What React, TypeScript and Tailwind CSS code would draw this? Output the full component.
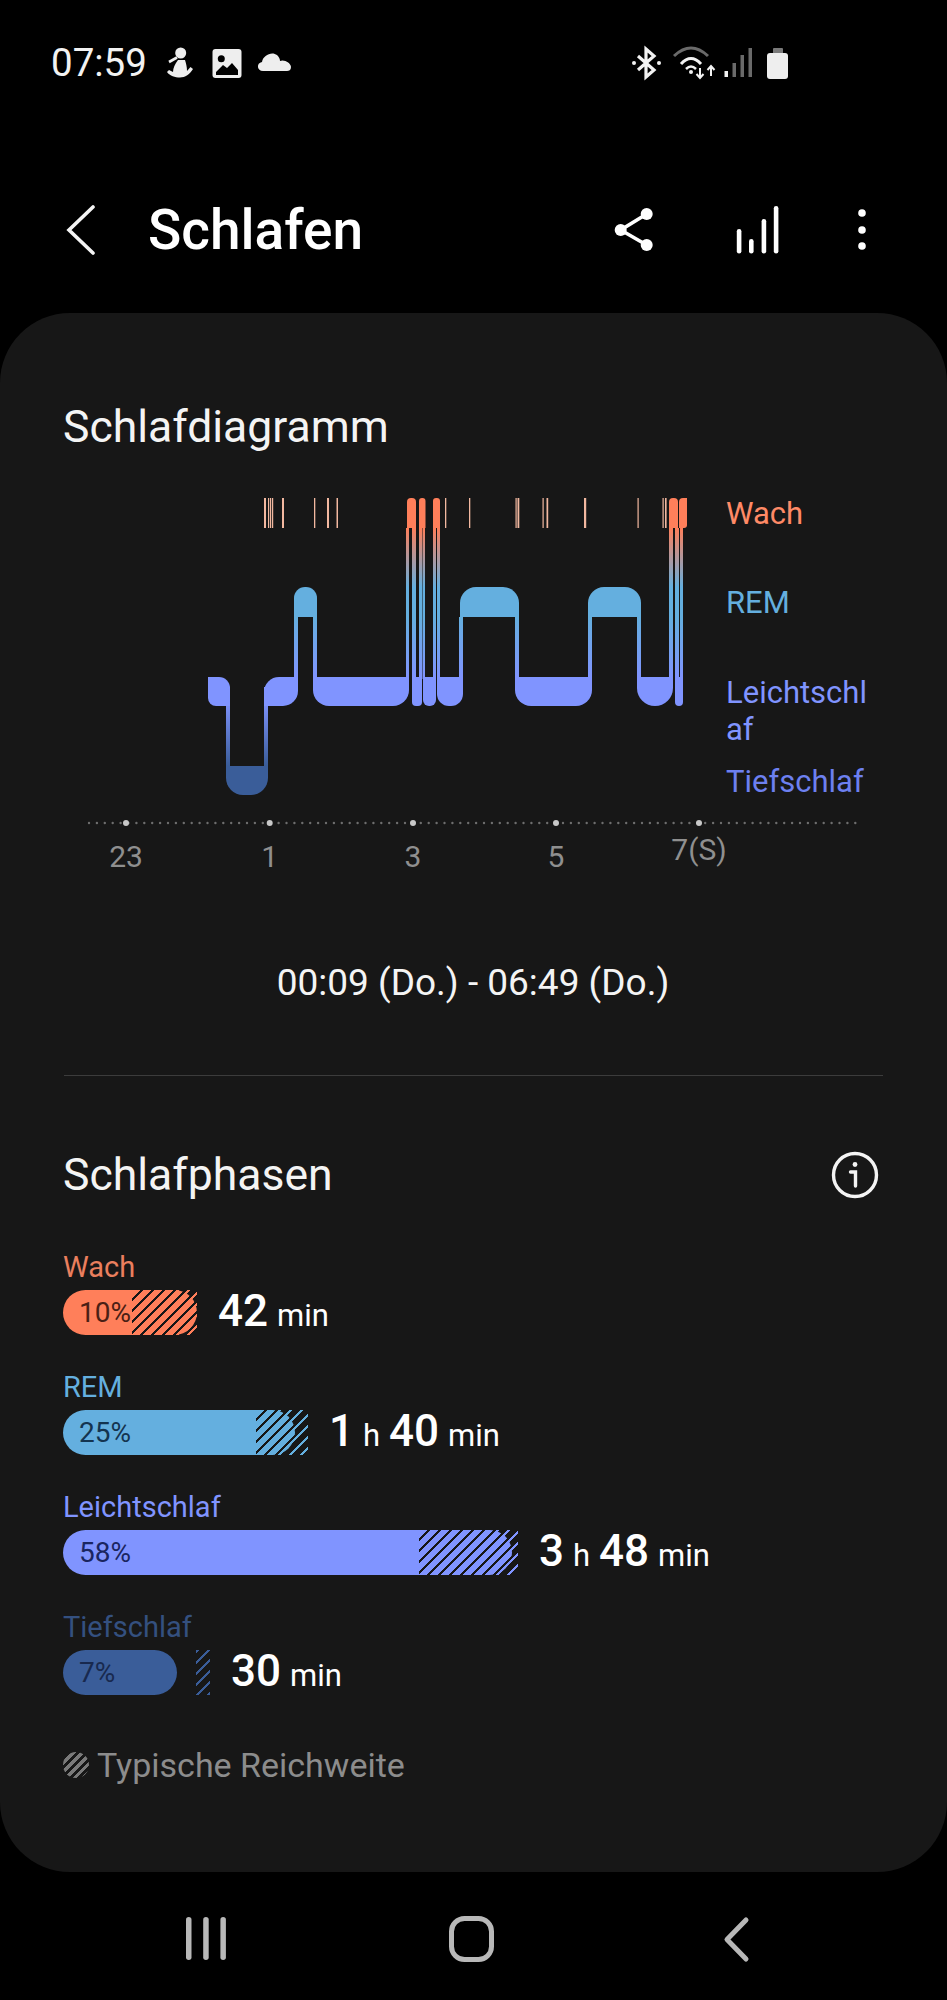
import React from 'react';

// corner radii go top-left, top-right, bottom-right, bottom-left
const block = (x1: number, y1: number, x2: number, y2: number, tl = 0, tr = 0, br = 0, bl = 0) =>
  `M${x1 + tl} ${y1}H${x2 - tr}A${tr} ${tr} 0 0 1 ${x2} ${y1 + tr}V${y2 - br}A${br} ${br} 0 0 1 ${x2 - br} ${y2}H${x1 + bl}A${bl} ${bl} 0 0 1 ${x1} ${y2 - bl}V${y1 + tl}A${tl} ${tl} 0 0 1 ${x1 + tl} ${y1}Z`;

const ORANGE = '#ff7f5a';
const BLUE = '#64afdf';
const PERI = '#8094ff';
const DEEP = '#3a5d99';

const WAKE_TOP = 498;
const WAKE_BOTTOM = 528;
const REM_TOP = 587;
const REM_BOTTOM = 617;
const LIGHT_TOP = 677;
const LIGHT_BOTTOM = 706;
const DEEP_TOP = 766;
const DEEP_BOTTOM = 795;

// [x, width] of the hairline wake marks
const wakeTicks = [
  [264, 2], [268, 1.2], [270, 1.2], [272, 1.2], [282, 2], [314, 1.3], [327, 2], [336.5, 1.5],
  [445, 1.3], [469, 1.3], [515.5, 1.2], [517.5, 1.8], [542.5, 1.2], [546.5, 1.7], [584, 2.2],
  [637.5, 1.2], [662.5, 1.2], [665, 1.6],
];

// [x1, x2, y1, y2] wake/rem to light connectors
const upperLinks = [
  [406, 409, WAKE_BOTTOM, LIGHT_TOP + 2],
  [412, 416, WAKE_BOTTOM, LIGHT_TOP + 2],
  [419, 422, WAKE_BOTTOM, LIGHT_TOP + 2],
  [422.5, 425, WAKE_BOTTOM, LIGHT_TOP + 2],
  [433, 436, WAKE_BOTTOM, LIGHT_TOP + 2],
  [437, 440, WAKE_BOTTOM, LIGHT_TOP + 2],
  [294, 298, REM_BOTTOM, LIGHT_TOP + 2],
  [313, 317, REM_BOTTOM, LIGHT_TOP + 2],
  [459, 463, REM_BOTTOM, LIGHT_TOP + 2],
  [515, 519, REM_BOTTOM, LIGHT_TOP + 2],
  [588, 592, REM_BOTTOM, LIGHT_TOP + 2],
  [637, 641, REM_BOTTOM, LIGHT_TOP + 2],
  [669, 673, WAKE_BOTTOM, LIGHT_TOP + 2],
  [675, 679, WAKE_BOTTOM, LIGHT_TOP + 2],
  [680, 683, WAKE_BOTTOM, LIGHT_TOP + 2],
];

function SleepChart() {
  return (
    <svg width="633" height="320" viewBox="87 490 633 320" className="shrink-0">
      <defs>
        <linearGradient id="upper" gradientUnits="userSpaceOnUse" x1="0" y1={WAKE_BOTTOM} x2="0" y2={LIGHT_TOP}>
          <stop offset="0" stopColor={ORANGE} />
          <stop offset="0.4" stopColor={BLUE} />
          <stop offset="0.6" stopColor={BLUE} />
          <stop offset="1" stopColor={PERI} />
        </linearGradient>
        <linearGradient id="lower" gradientUnits="userSpaceOnUse" x1="0" y1={LIGHT_BOTTOM - 6} x2="0" y2={DEEP_TOP}>
          <stop offset="0" stopColor={PERI} />
          <stop offset="1" stopColor={DEEP} />
        </linearGradient>
      </defs>

      {wakeTicks.map(([x, w]) => (
        <rect key={x} x={x} y={WAKE_TOP} width={w} height={WAKE_BOTTOM - WAKE_TOP} fill="#f2b8a0" />
      ))}

      {upperLinks.map(([x1, x2, y1, y2]) => (
        <rect key={x1} x={x1} y={y1} width={x2 - x1} height={y2 - y1} fill="url(#upper)" />
      ))}
      <rect x="226" y={LIGHT_TOP + 10} width="4" height={DEEP_TOP - LIGHT_TOP - 8} fill="url(#lower)" />
      <rect x="264" y={LIGHT_TOP + 10} width="4" height={DEEP_TOP - LIGHT_TOP - 8} fill="url(#lower)" />

      {/* wake */}
      <path d={block(407, WAKE_TOP, 416, WAKE_BOTTOM, 4, 4)} fill={ORANGE} />
      <path d={block(419, WAKE_TOP, 425.5, WAKE_BOTTOM, 3, 3)} fill={ORANGE} />
      <path d={block(433, WAKE_TOP, 440, WAKE_BOTTOM, 3, 3)} fill={ORANGE} />
      <path d={block(669, WAKE_TOP, 678, WAKE_BOTTOM, 4, 4)} fill={ORANGE} />
      <path d={block(679, WAKE_TOP, 687, WAKE_BOTTOM, 4, 0, 3, 0)} fill={ORANGE} />

      {/* rem */}
      <path d={block(294, REM_TOP, 317, REM_BOTTOM, 11, 11)} fill={BLUE} />
      <rect x="406" y={REM_TOP} width="2.5" height={REM_BOTTOM - REM_TOP} fill={BLUE} />
      <path d={block(460, REM_TOP, 519, REM_BOTTOM, 16, 16)} fill={BLUE} />
      <path d={block(588, REM_TOP, 641, REM_BOTTOM, 16, 16)} fill={BLUE} />

      {/* light */}
      <path d={block(208, LIGHT_TOP, 230, LIGHT_BOTTOM, 0, 11, 0, 8)} fill={PERI} />
      <path d={block(264, LIGHT_TOP, 298, LIGHT_BOTTOM, 15, 0, 15, 0)} fill={PERI} />
      <path d={block(313, LIGHT_TOP, 409, LIGHT_BOTTOM, 0, 0, 16, 16)} fill={PERI} />
      <path d={block(412, LIGHT_TOP, 422, LIGHT_BOTTOM, 0, 0, 4, 4)} fill={PERI} />
      <path d={block(423, LIGHT_TOP, 436, LIGHT_BOTTOM, 0, 0, 6, 6)} fill={PERI} />
      <path d={block(437, LIGHT_TOP, 463, LIGHT_BOTTOM, 0, 0, 12, 12)} fill={PERI} />
      <path d={block(515, LIGHT_TOP, 592, LIGHT_BOTTOM, 0, 0, 16, 16)} fill={PERI} />
      <path d={block(637, LIGHT_TOP, 673, LIGHT_BOTTOM, 0, 0, 18, 18)} fill={PERI} />
      <path d={block(675, LIGHT_TOP, 683, LIGHT_BOTTOM, 0, 0, 4, 4)} fill={PERI} />

      {/* deep */}
      <path d={block(226, DEEP_TOP, 268, DEEP_BOTTOM, 0, 0, 17, 17)} fill={DEEP} />
    </svg>
  );
}

function AxisDots() {
  const dots = Array.from({ length: 98 }, (_, i) => 89 + i * 7.9);
  const ticks = [
    { x: 126, label: '23', y: 867 },
    { x: 269.7, label: '1', y: 867 },
    { x: 413, label: '3', y: 867 },
    { x: 556, label: '5', y: 867 },
    { x: 699, label: '7(S)', y: 860 },
  ];
  return (
    <svg width="819" height="70" viewBox="64 810 819 70" className="ml-[1px] block">
      {dots.map((x) => (
        <circle key={x} cx={x} cy="823" r="1.2" fill="#6e6e6e" />
      ))}
      {ticks.map((t) => (
        <g key={t.x}>
          <circle cx={t.x} cy="823" r="3" fill="#c8c8c8" />
          <text x={t.x} y={t.y} textAnchor="middle" fontSize="30" fill="#8f8f8f" fontFamily="Roboto, sans-serif">
            {t.label}
          </text>
        </g>
      ))}
    </svg>
  );
}

function StatusLeftIcons() {
  return (
    <svg width="150" height="55" viewBox="150 35 150 55" className="block">
      <circle cx="180.7" cy="52" r="5.5" fill="#eee" />
      <path d="M169 61L177 56.5" stroke="#eee" strokeWidth="2.6" />
      <path d="M178 59L185 59C186 62 187 66 187 70L190.5 66L193 68C190 73 185 76.5 180 76.5C175 76.5 170 75 167 71L169 69L173 71C173 67 175 63 178 59Z" fill="#eee" />
      <rect x="212.5" y="48" width="29" height="29" rx="3" fill="#eee" />
      <circle cx="221.3" cy="57.7" r="3.5" fill="#000" />
      <path d="M216 74V71L223 64L227 67L232 62L238 69V74Z" fill="#000" />
      <path d="M263 70C257 70 256 62 262 61C263 54 272 50 277 54C279 56 280 58 280 60C284 58 291 62 291 66C291 69 289 70 287 70Z" fill="#eee" />
    </svg>
  );
}

function StatusRightIcons() {
  return (
    <svg width="180" height="55" viewBox="620 35 180 55" className="block">
      <path d="M640 55L656 69L648 76V48L656 55L640 69" fill="none" stroke="#f2f2f2" strokeWidth="3.2" />
      <circle cx="636" cy="62" r="2" fill="#f2f2f2" />
      <circle cx="661" cy="62" r="2" fill="#f2f2f2" />

      <path d="M676 55Q693 39 710 55" fill="none" stroke="#6a6a6a" strokeWidth="3" />
      <path d="M683 63Q693 52 703 63" fill="none" stroke="#f2f2f2" strokeWidth="3" />
      <path d="M688 68Q693 63 698 68" fill="none" stroke="#f2f2f2" strokeWidth="2.5" />
      <circle cx="693" cy="71" r="2" fill="#f2f2f2" />
      <path d="M702 67V76M698.5 73L702 77L705.5 73" fill="none" stroke="#f2f2f2" strokeWidth="2" />
      <path d="M713 75V66M709.5 69L713 65L716.5 69" fill="none" stroke="#f2f2f2" strokeWidth="2" />

      <rect x="726.5" y="70" width="3.5" height="6" fill="#f2f2f2" />
      <rect x="734.5" y="62" width="3.5" height="14" fill="#6a6a6a" />
      <rect x="742.5" y="54" width="3.5" height="22" fill="#6a6a6a" />
      <rect x="750.5" y="47" width="3.5" height="29" fill="#6a6a6a" />

      <path d="M775 52V48Q775 47 776 47H784Q785 47 785 48V52Z" fill="#7a7a7a" />
      <path d="M769 55Q769 52 772 52H787Q790 52 790 55V75Q790 78 787 78H772Q769 78 769 75Z" fill="#eee" />
    </svg>
  );
}

function Value({ parts }: { parts: [string, string][] }) {
  return (
    <div className="ml-[21px] mt-[2px] flex items-baseline gap-[9px] text-white leading-[45px]">
      {parts.map(([num, unit]) => (
        <React.Fragment key={unit}>
          <span className="text-[44px] font-medium">{num}</span>
          <span className="text-[31px]">{unit}</span>
        </React.Fragment>
      ))}
    </div>
  );
}

export default function App() {
  return (
    <div className="flex h-[2000px] w-[947px] flex-col bg-black font-['Roboto',sans-serif] text-white">
      {/* status bar */}
      <div className="flex h-[126px] items-center pl-[51px]">
        <span className="w-[99px] text-[38.5px] leading-none text-[#f2f2f2]">07:59</span>
        <StatusLeftIcons />
        <div className="ml-[318px]">
          <StatusRightIcons />
        </div>
      </div>

      {/* header */}
      <div className="flex h-[187px] items-center pt-[20px]">
        <svg width="30" height="50" viewBox="66 204 30 50" className="ml-[66px] shrink-0">
          <path d="M93 206L69 229L93 252" fill="none" stroke="#f4f4f4" strokeWidth="3.6" strokeLinecap="round" />
        </svg>
        <h1 className="ml-[52px] mt-[2px] w-[213px] text-[55px] font-medium leading-none">Schlafen</h1>
        <svg width="42" height="46" viewBox="613 206 42 46" className="ml-[252px] shrink-0">
          <path d="M646.7 213L620.7 229L646.7 244" fill="none" stroke="#fff" strokeWidth="3.6" />
          <circle cx="620.7" cy="229" r="6" fill="#fff" />
          <circle cx="646.7" cy="213" r="6" fill="#fff" />
          <circle cx="646.7" cy="244" r="6" fill="#fff" />
        </svg>
        <svg width="44" height="50" viewBox="736 204 44 50" className="ml-[81px] shrink-0">
          <rect x="736.8" y="228" width="4.6" height="24.5" rx="2.3" fill="#fff" />
          <rect x="749" y="238" width="4.6" height="14.5" rx="2.3" fill="#fff" />
          <rect x="761.6" y="218" width="4.6" height="34.5" rx="2.3" fill="#fff" />
          <rect x="773.8" y="205" width="4.6" height="47.5" rx="2.3" fill="#fff" />
        </svg>
        <svg width="16" height="46" viewBox="854 206 16 46" className="ml-[74px] shrink-0">
          <circle cx="862" cy="212" r="3.8" fill="#fff" />
          <circle cx="862" cy="229" r="3.8" fill="#fff" />
          <circle cx="862" cy="245" r="3.8" fill="#fff" />
        </svg>
      </div>

      {/* card */}
      <div className="h-[1559px] shrink-0 rounded-[70px] bg-[#171717] pl-[63px] pr-[64px] pt-[88px]">
        <h2 className="text-[44.5px] leading-[52px] text-[#f4f4f4]">Schlafdiagramm</h2>

        <div className="ml-[24px] mt-[37px] flex h-[320px]">
          <SleepChart />
          <div className="ml-[6px] flex w-[150px] flex-col break-all pt-[5px] text-[31px] leading-[37px]">
            <span className="text-[#ff8a66]">Wach</span>
            <span className="mt-[52px] text-[#64afdf]">REM</span>
            <span className="mt-[53px] text-[#8094ff]">Leichtschlaf</span>
            <span className="mt-[15px] text-[#6d80f0]">Tiefschlaf</span>
          </div>
        </div>

        <AxisDots />

        <p className="mt-[81px] text-center text-[37px] leading-[44px] text-[#f4f4f4]">00:09 (Do.) - 06:49 (Do.)</p>

        <div className="ml-[1px] mt-[70px] h-[1px] bg-[#3c3c3c]" />

        <div className="mt-[73px] flex items-center justify-between">
          <h2 className="text-[44.5px] leading-[52px] text-[#f4f4f4]">Schlafphasen</h2>
          <svg width="48" height="48" viewBox="0 0 48 48" className="mr-[4px]">
            <circle cx="24" cy="24" r="21.5" fill="none" stroke="#f4f4f4" strokeWidth="3.4" />
            <circle cx="24" cy="13.5" r="2.4" fill="#f4f4f4" />
            <path d="M19.5 21H24.5V35" fill="none" stroke="#f4f4f4" strokeWidth="3.4" strokeLinecap="round" />
          </svg>
        </div>

        {/* Wach */}
        <p className="mt-[48px] text-[29px] leading-[36px] text-[#ea7f5e]">Wach</p>
        <div className="mt-[5px] flex h-[45px] items-center">
          <div className="relative h-[45px] w-[134px] overflow-hidden">
            <div className="absolute right-0 top-0 h-full w-[65px] bg-[repeating-linear-gradient(135deg,#ff7f5a_0px,#ff7f5a_2.4px,transparent_2.4px,transparent_7.8px)]" />
            <div className="absolute left-0 top-0 h-full w-[134px] rounded-full bg-[#ff7f5a]" />
            <div className="absolute right-0 top-0 h-full w-[65px] bg-[repeating-linear-gradient(135deg,transparent_0px,transparent_5.8px,#171717_5.8px,#171717_7.8px)]" />
            <span className="absolute left-[16px] top-0 text-[28px] leading-[45px] text-[#4a2015]">10%</span>
          </div>
          <Value parts={[['42', 'min']]} />
        </div>

        {/* REM */}
        <p className="mt-[34px] text-[29px] leading-[36px] text-[#64afdf]">REM</p>
        <div className="mt-[5px] flex h-[45px] items-center">
          <div className="relative h-[45px] w-[245px] overflow-hidden">
            <div className="absolute right-0 top-0 h-full w-[52px] bg-[repeating-linear-gradient(135deg,#64afdf_0px,#64afdf_2.4px,transparent_2.4px,transparent_7.8px)]" />
            <div className="absolute left-0 top-0 h-full w-[232px] rounded-full bg-[#64afdf]" />
            <div className="absolute right-0 top-0 h-full w-[52px] bg-[repeating-linear-gradient(135deg,transparent_0px,transparent_5.8px,#171717_5.8px,#171717_7.8px)]" />
            <span className="absolute left-[16px] top-0 text-[28px] leading-[45px] text-[#143450]">25%</span>
          </div>
          <Value parts={[['1', 'h'], ['40', 'min']]} />
        </div>

        {/* Leichtschlaf */}
        <p className="mt-[34px] text-[29px] leading-[36px] text-[#8094ff]">Leichtschlaf</p>
        <div className="mt-[5px] flex h-[45px] items-center">
          <div className="relative h-[45px] w-[455px] overflow-hidden">
            <div className="absolute right-0 top-0 h-full w-[99px] bg-[repeating-linear-gradient(135deg,#8094ff_0px,#8094ff_2.4px,transparent_2.4px,transparent_7.8px)]" />
            <div className="absolute left-0 top-0 h-full w-[449px] rounded-full bg-[#8094ff]" />
            <div className="absolute right-0 top-0 h-full w-[99px] bg-[repeating-linear-gradient(135deg,transparent_0px,transparent_5.8px,#171717_5.8px,#171717_7.8px)]" />
            <span className="absolute left-[16px] top-0 text-[28px] leading-[45px] text-[#1a2560]">58%</span>
          </div>
          <Value parts={[['3', 'h'], ['48', 'min']]} />
        </div>

        {/* Tiefschlaf */}
        <p className="mt-[34px] text-[29px] leading-[36px] text-[#34507f]">Tiefschlaf</p>
        <div className="mt-[5px] flex h-[45px] items-center">
          <div className="relative h-[45px] w-[147px] overflow-hidden">
            <div className="absolute right-0 top-0 h-full w-[14px] bg-[repeating-linear-gradient(135deg,#3a5d99_0px,#3a5d99_2.4px,transparent_2.4px,transparent_7.8px)]" />
            <div className="absolute left-0 top-0 h-full w-[114px] rounded-full bg-[#3a5d99]" />
            <span className="absolute left-[16px] top-0 text-[28px] leading-[45px] text-[#18294f]">7%</span>
          </div>
          <Value parts={[['30', 'min']]} />
        </div>

        <div className="mt-[50px] flex items-center">
          <div className="h-[26px] w-[26px] rounded-full bg-[repeating-linear-gradient(135deg,#7a7a7a_0px,#7a7a7a_3.4px,transparent_3.4px,transparent_6.2px)]" />
          <span className="ml-[8px] text-[34px] leading-[40px] text-[#8c8c8c]">Typische Reichweite</span>
        </div>
      </div>

      {/* nav bar */}
      <div className="flex flex-1 items-start pt-[43px]">
        <svg width="44" height="46" viewBox="184 1915 44 46" className="ml-[184px] shrink-0">
          <rect x="186" y="1917" width="5.5" height="43" rx="2.75" fill="#b8b8b8" />
          <rect x="203.2" y="1917" width="5.5" height="43" rx="2.75" fill="#b8b8b8" />
          <rect x="220.4" y="1917" width="5.5" height="43" rx="2.75" fill="#b8b8b8" />
        </svg>
        <svg width="46" height="48" viewBox="448 1914 46 48" className="ml-[220px] shrink-0">
          <rect x="451.5" y="1917.5" width="40" height="41" rx="13" fill="none" stroke="#b8b8b8" strokeWidth="5" />
        </svg>
        <svg width="28" height="48" viewBox="723 1914 28 48" className="ml-[229px] shrink-0">
          <path d="M746 1919L727 1938.5L746 1958" fill="none" stroke="#b8b8b8" strokeWidth="5" strokeLinecap="round" strokeLinejoin="round" />
        </svg>
      </div>
    </div>
  );
}
